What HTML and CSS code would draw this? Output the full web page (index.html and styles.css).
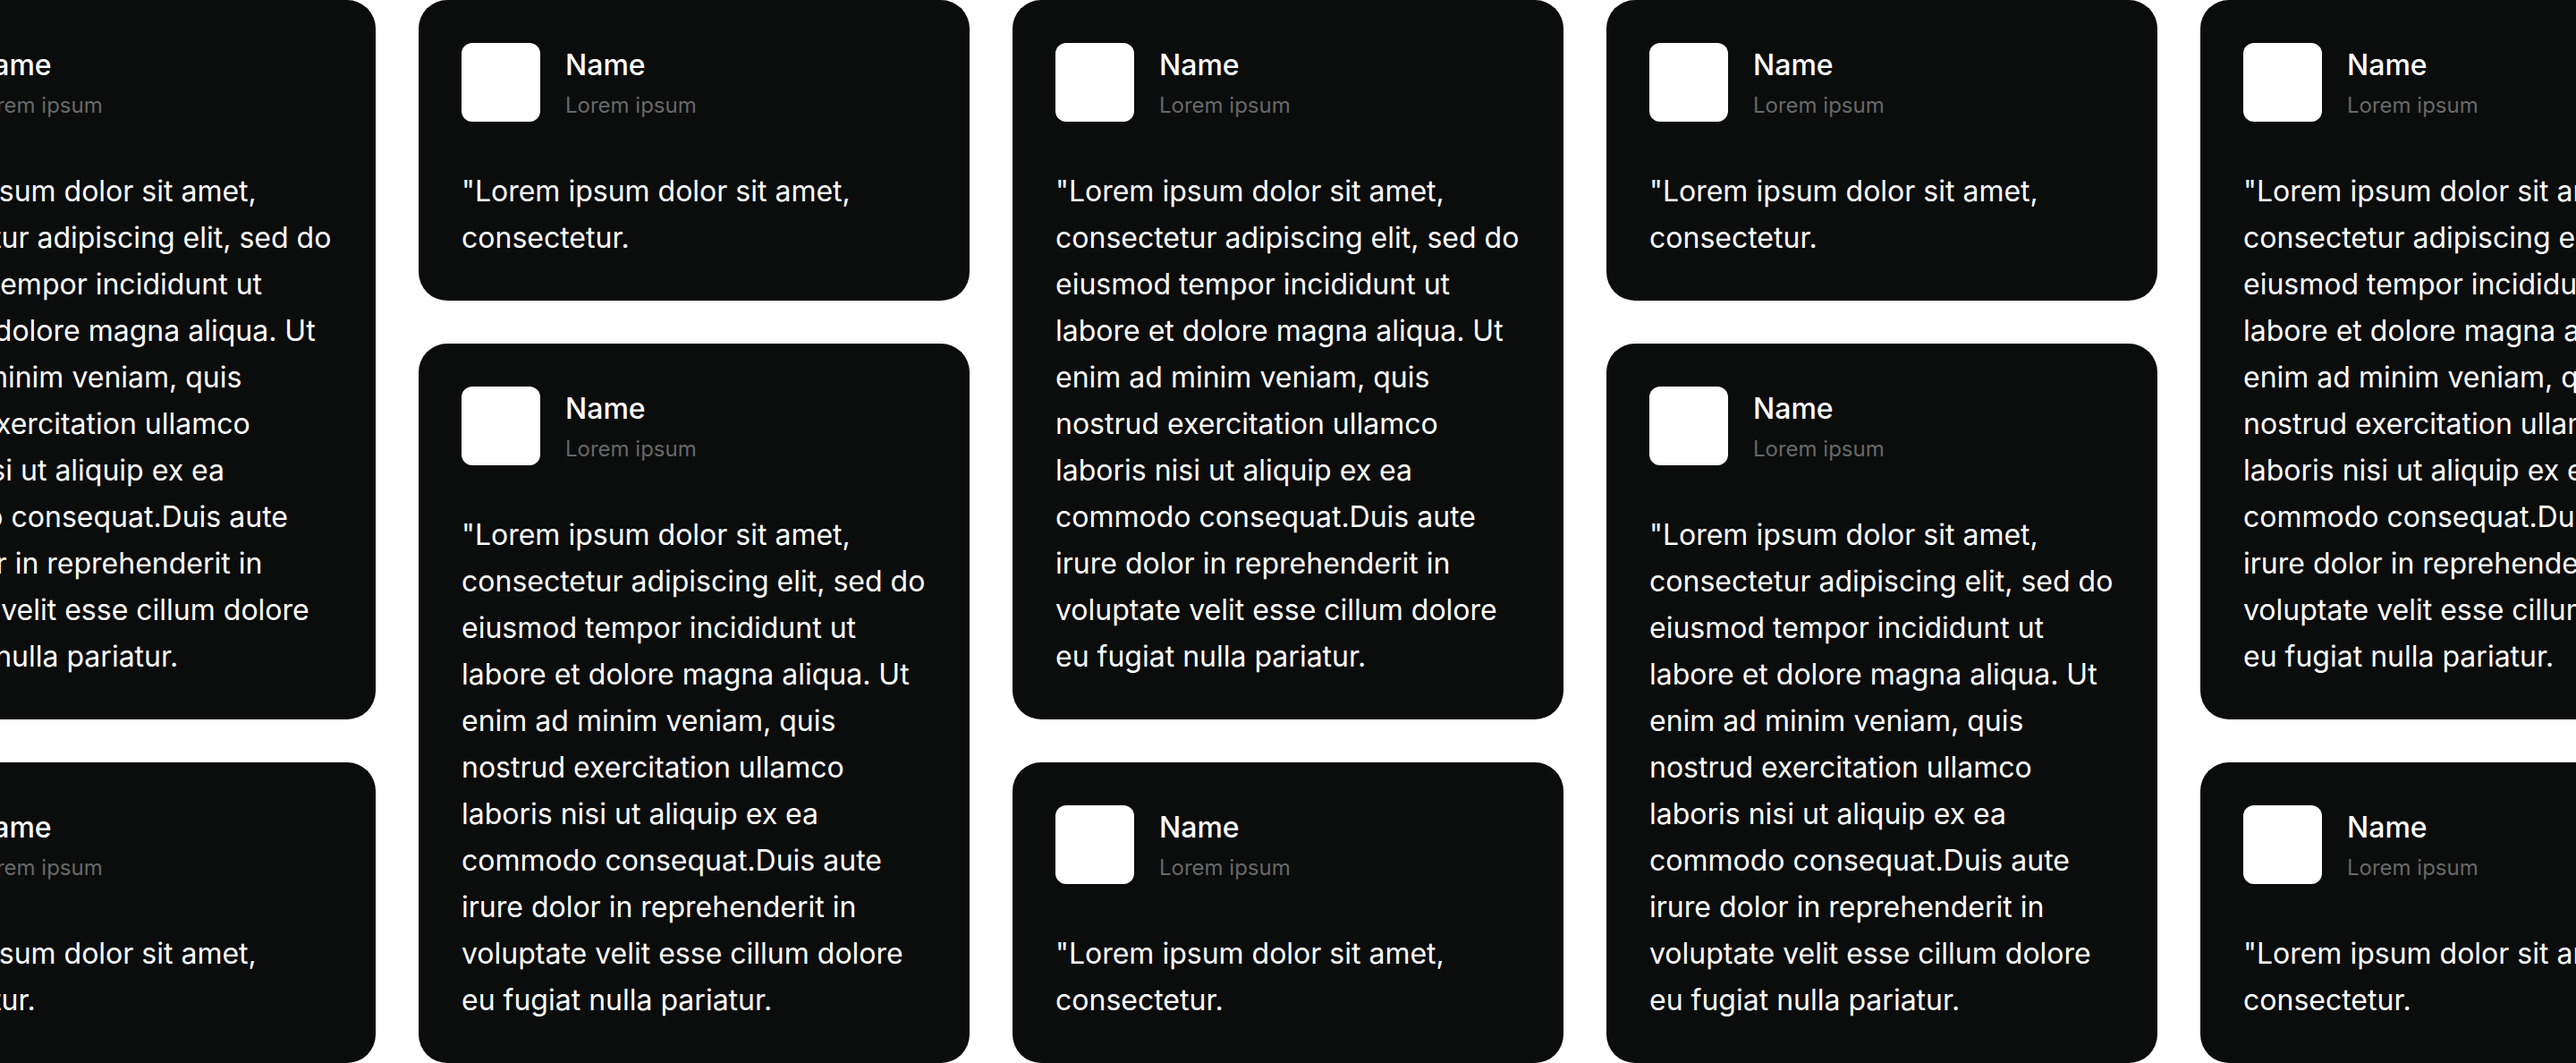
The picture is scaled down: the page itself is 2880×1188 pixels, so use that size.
FILE: index.html
```html
<!DOCTYPE html>
<html lang="en">
<head>
<meta charset="utf-8">
<title>Testimonials</title>
<link rel="stylesheet" href="styles.css">
</head>
<body>
<main class="wall">
  <div class="col">
    <article class="card">
      <header class="card-head"><div class="avatar"></div><div class="who"><div class="name">Name</div><div class="role">Lorem ipsum</div></div></header>
      <p class="quote">"Lorem ipsum dolor sit amet, consectetur adipiscing elit, sed do eiusmod tempor incididunt ut labore et dolore magna aliqua. Ut enim ad minim veniam, quis nostrud exercitation ullamco laboris nisi ut aliquip ex ea commodo consequat.Duis aute irure dolor in reprehenderit in voluptate velit esse cillum dolore eu fugiat nulla pariatur.</p>
    </article>
    <article class="card">
      <header class="card-head"><div class="avatar"></div><div class="who"><div class="name">Name</div><div class="role">Lorem ipsum</div></div></header>
      <p class="quote">"Lorem ipsum dolor sit amet, consectetur.</p>
    </article>
  </div>
  <div class="col">
    <article class="card">
      <header class="card-head"><div class="avatar"></div><div class="who"><div class="name">Name</div><div class="role">Lorem ipsum</div></div></header>
      <p class="quote">"Lorem ipsum dolor sit amet, consectetur.</p>
    </article>
    <article class="card">
      <header class="card-head"><div class="avatar"></div><div class="who"><div class="name">Name</div><div class="role">Lorem ipsum</div></div></header>
      <p class="quote">"Lorem ipsum dolor sit amet, consectetur adipiscing elit, sed do eiusmod tempor incididunt ut labore et dolore magna aliqua. Ut enim ad minim veniam, quis nostrud exercitation ullamco laboris nisi ut aliquip ex ea commodo consequat.Duis aute irure dolor in reprehenderit in voluptate velit esse cillum dolore eu fugiat nulla pariatur.</p>
    </article>
  </div>
  <div class="col">
    <article class="card">
      <header class="card-head"><div class="avatar"></div><div class="who"><div class="name">Name</div><div class="role">Lorem ipsum</div></div></header>
      <p class="quote">"Lorem ipsum dolor sit amet, consectetur adipiscing elit, sed do eiusmod tempor incididunt ut labore et dolore magna aliqua. Ut enim ad minim veniam, quis nostrud exercitation ullamco laboris nisi ut aliquip ex ea commodo consequat.Duis aute irure dolor in reprehenderit in voluptate velit esse cillum dolore eu fugiat nulla pariatur.</p>
    </article>
    <article class="card">
      <header class="card-head"><div class="avatar"></div><div class="who"><div class="name">Name</div><div class="role">Lorem ipsum</div></div></header>
      <p class="quote">"Lorem ipsum dolor sit amet, consectetur.</p>
    </article>
  </div>
  <div class="col">
    <article class="card">
      <header class="card-head"><div class="avatar"></div><div class="who"><div class="name">Name</div><div class="role">Lorem ipsum</div></div></header>
      <p class="quote">"Lorem ipsum dolor sit amet, consectetur.</p>
    </article>
    <article class="card">
      <header class="card-head"><div class="avatar"></div><div class="who"><div class="name">Name</div><div class="role">Lorem ipsum</div></div></header>
      <p class="quote">"Lorem ipsum dolor sit amet, consectetur adipiscing elit, sed do eiusmod tempor incididunt ut labore et dolore magna aliqua. Ut enim ad minim veniam, quis nostrud exercitation ullamco laboris nisi ut aliquip ex ea commodo consequat.Duis aute irure dolor in reprehenderit in voluptate velit esse cillum dolore eu fugiat nulla pariatur.</p>
    </article>
  </div>
  <div class="col">
    <article class="card">
      <header class="card-head"><div class="avatar"></div><div class="who"><div class="name">Name</div><div class="role">Lorem ipsum</div></div></header>
      <p class="quote">"Lorem ipsum dolor sit amet, consectetur adipiscing elit, sed do eiusmod tempor incididunt ut labore et dolore magna aliqua. Ut enim ad minim veniam, quis nostrud exercitation ullamco laboris nisi ut aliquip ex ea commodo consequat.Duis aute irure dolor in reprehenderit in voluptate velit esse cillum dolore eu fugiat nulla pariatur.</p>
    </article>
    <article class="card">
      <header class="card-head"><div class="avatar"></div><div class="who"><div class="name">Name</div><div class="role">Lorem ipsum</div></div></header>
      <p class="quote">"Lorem ipsum dolor sit amet, consectetur.</p>
    </article>
  </div>
</main>
</body>
</html>
```
FILE: styles.css
```css
html, body {
  margin: 0;
  padding: 0;
  background: #ffffff;
  overflow: hidden;
}

body {
  width: 2880px;
  height: 1188px;
  font-family: "Inter", "Noto Sans", sans-serif;
}

.wall {
  display: flex;
  justify-content: center;
  gap: 48px;
  width: 100%;
}

.col {
  flex: 0 0 616px;
  display: flex;
  flex-direction: column;
  gap: 48px;
}

.card {
  background: #0b0c0c;
  border-radius: 32px;
  padding: 48px 48px 44px;
  color: #ffffff;
}

.card-head {
  display: flex;
  align-items: center;
  gap: 28px;
}

.avatar {
  width: 88px;
  height: 88px;
  border-radius: 12px;
  background: #ffffff;
  flex-shrink: 0;
}

.who {
  display: flex;
  flex-direction: column;
  gap: 9px;
}

.name {
  font-size: 32px;
  line-height: 40px;
  padding-top: 3px;
  font-weight: 500;
  color: #ffffff;
}

.role {
  font-size: 24px;
  line-height: 32px;
  color: #666868;
}

.quote {
  margin: 52px 0 0;
  font-size: 32px;
  line-height: 52px;
  color: #ffffff;
}
```
